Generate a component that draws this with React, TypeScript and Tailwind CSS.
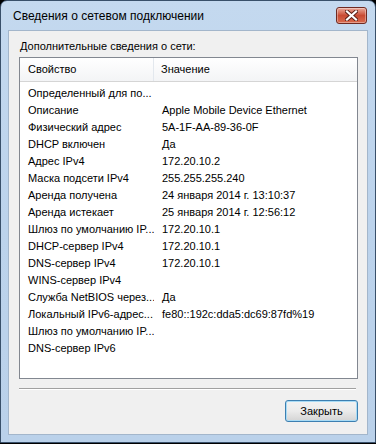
import React from 'react'

interface InfoRow {
  name: string;
  value: string;
}

const rows: InfoRow[] = [
  { name: 'Определенный для по...', value: '' },
  { name: 'Описание', value: 'Apple Mobile Device Ethernet' },
  { name: 'Физический адрес', value: '5A-1F-AA-89-36-0F' },
  { name: 'DHCP включен', value: 'Да' },
  { name: 'Адрес IPv4', value: '172.20.10.2' },
  { name: 'Маска подсети IPv4', value: '255.255.255.240' },
  { name: 'Аренда получена', value: '24 января 2014 г. 13:10:37' },
  { name: 'Аренда истекает', value: '25 января 2014 г. 12:56:12' },
  { name: 'Шлюз по умолчанию IP...', value: '172.20.10.1' },
  { name: 'DHCP-сервер IPv4', value: '172.20.10.1' },
  { name: 'DNS-сервер IPv4', value: '172.20.10.1' },
  { name: 'WINS-сервер IPv4', value: '' },
  { name: 'Служба NetBIOS через...', value: 'Да' },
  { name: 'Локальный IPv6-адрес...', value: 'fe80::192c:dda5:dc69:87fd%19' },
  { name: 'Шлюз по умолчанию IP...', value: '' },
  { name: 'DNS-сервер IPv6', value: '' },
];

const font = { fontFamily: '"Liberation Sans", Arial, sans-serif' };

const CloseButton: React.FC = () => (
  <div className="w-[31px] h-[17px] rounded-[3px] border border-[#6f2a22] bg-gradient-to-b from-[#e9a99a] via-[#c94b33] to-[#d96b4f] flex items-center justify-center shadow-[inset_0_0_0_1px_rgba(255,255,255,0.35)]">
    <svg width="13" height="11" viewBox="0 0 13 11">
      <path d="M2 1.5 L11 9.5 M11 1.5 L2 9.5" stroke="#5a1f16" strokeWidth="4" strokeLinecap="square" />
      <path d="M2 1.5 L11 9.5 M11 1.5 L2 9.5" stroke="#ffffff" strokeWidth="2.2" strokeLinecap="square" />
    </svg>
  </div>
);

const App: React.FC = () => {
  return (
    <div className="w-[376px] h-[444px] bg-black" style={font}>
      {/* Window frame */}
      <div className="w-[376px] h-[443px] rounded-t-[7px] border border-[#39506a] bg-gradient-to-b from-[#c4d9ef] via-[#bcd3ec] to-[#bad1ea] flex flex-col">
        {/* Title bar */}
        <div className="h-[29px] flex items-center justify-between pl-[12px] pr-[8px]">
          <span className="text-[12px] text-black pt-[1px]">Сведения о сетевом подключении</span>
          <CloseButton />
        </div>

        {/* Client area */}
        <div className="mx-[7px] h-[405px] bg-[#f0f0f0] border border-[#a3b6cb] flex flex-col">
          <div className="pl-[11px] pt-[9px] h-[26px] text-[11px] text-black leading-[13px]">
            Дополнительные сведения о сети:
          </div>

          {/* List view */}
          <div className="ml-[10px] w-[339px] h-[322px] bg-white border border-[#828790] flex flex-col">
            <div className="h-[24px] flex bg-gradient-to-b from-white to-[#f3f4f6] border-b border-[#d5d5d5] text-[11px] text-black">
              <div className="w-[134px] border-r border-[#e3e8ee] pl-[8px] flex items-center">Свойство</div>
              <div className="flex-1 pl-[7px] flex items-center">Значение</div>
            </div>
            <div className="pt-[3px] flex flex-col">
              {rows.map((row, i) => (
                <div key={i} className="h-[17px] flex items-center text-[11px] text-black leading-[13px]">
                  <div className="w-[134px] pl-[8px] whitespace-nowrap overflow-hidden">{row.name}</div>
                  <div className="flex-1 pl-[8px] whitespace-nowrap">{row.value}</div>
                </div>
              ))}
            </div>
          </div>

          {/* Separator */}
          <div className="ml-[10px] w-[337px] mt-[9px] border-t border-[#a0a0a0] border-b border-b-white" />

          {/* Buttons */}
          <div className="flex justify-end pr-[9px] mt-[10px]">
            <button className="w-[73px] h-[22px] rounded-[3px] border border-[#3c7fb1] bg-gradient-to-b from-[#f2f2f2] via-[#ebebeb] to-[#d4d4d4] shadow-[inset_0_0_0_1px_#a8dbf5] text-[11px] text-black">
              Закрыть
            </button>
          </div>
        </div>
      </div>
    </div>
  );
};

export default App;
